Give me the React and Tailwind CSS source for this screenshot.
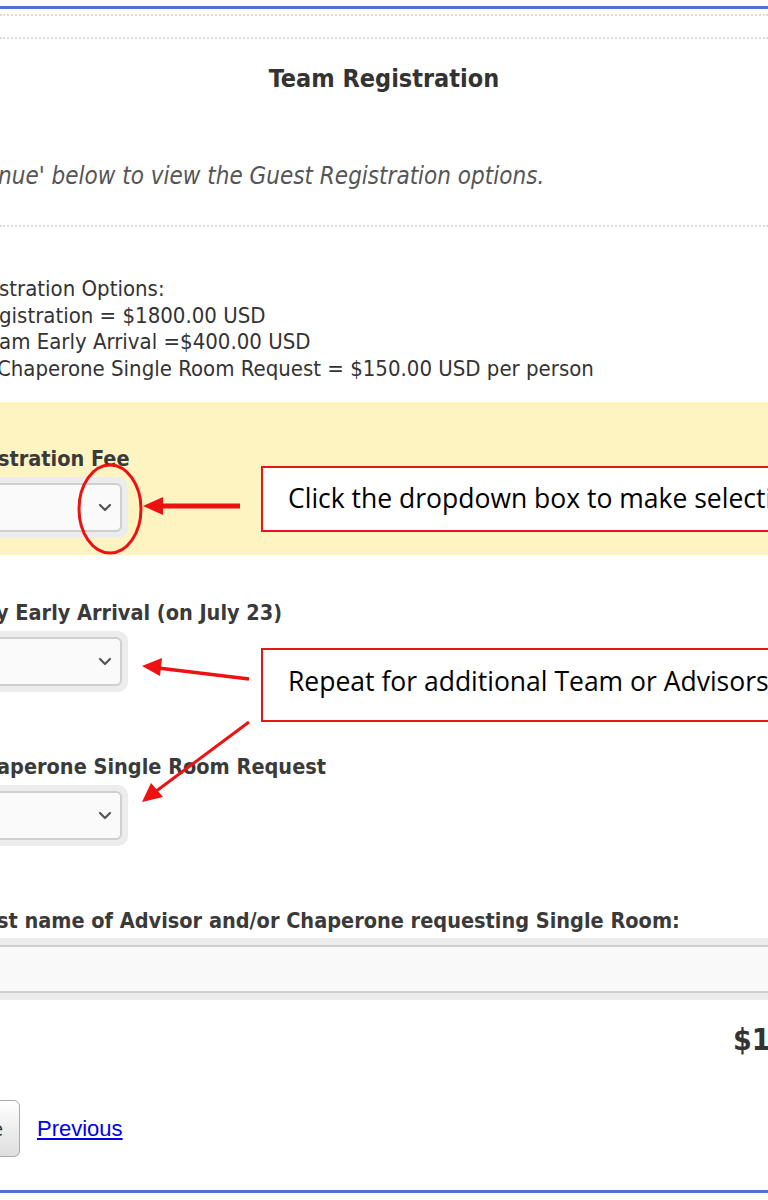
import React from "react";

function Chevron() {
  return (
    <svg width="14" height="10" viewBox="0 0 14 10" className="block">
      <polyline points="2,2 7,7 12,2" fill="none" stroke="#555" strokeWidth="2.2" strokeLinecap="round" strokeLinejoin="round" />
    </svg>
  );
}

function Select() {
  return (
    <div className="-ml-[20px] w-[148px] h-[61px] rounded-[10px] bg-[#ececec] p-[6px]">
      <div className="h-full rounded-[6px] border-2 border-[#cfcfcf] bg-[#fafafa] flex items-center justify-end pr-[8px]">
        <Chevron />
      </div>
    </div>
  );
}

export default function App() {
  const main = "font-['DejaVu_Sans_Condensed','DejaVu_Sans',sans-serif] font-stretch-condensed";
  const label = "h-[26px] leading-[26px] text-[21.5px] font-bold text-[#3a3a3a] whitespace-nowrap";
  const callout = "absolute left-[261px] w-[600px] border-2 border-[#e8141c] bg-white flex items-center pl-[25px] font-['Open_Sans',sans-serif] font-stretch-normal text-[26.5px] text-black whitespace-nowrap";
  return (
    <div className={`relative w-[768px] h-[1200px] overflow-hidden bg-white ${main}`}>
      <div className="mt-[6px] h-[3px] bg-[#4a77c9]" />
      <div className="mt-[5px] border-t-2 border-dotted border-[#dcdcdc]" />
      <div className="mt-[21px] border-t-2 border-dotted border-[#dcdcdc]" />
      <div className="mt-[20px] h-[40px] leading-[40px] text-center text-[25px] font-bold text-[#333]">
        Team Registration
      </div>
      <div className="mt-[62px] h-[30px] leading-[30px] whitespace-nowrap text-[24px] italic text-[#555] -ml-[2px]">
        nue' below to view the Guest Registration options.
      </div>
      <div className="mt-[34px] border-t-2 border-dotted border-[#dcdcdc]" />
      <div className="mt-[49px] text-[22px] leading-[26.5px] text-[#333] whitespace-nowrap">
        <div className="-ml-[1px]">stration Options:</div>
        <div className="-ml-[1px]">gistration = $1800.00 USD</div>
        <div className="-ml-[1px]">am Early Arrival =$400.00 USD</div>
        <div className="-ml-[3px]">Chaperone Single Room Request = $150.00 USD per person</div>
      </div>
      <div className="mt-[20px] bg-[#fdf4c2] pt-[44px] pb-[17px]">
        <div className={`${label} -ml-[2px]`}>stration Fee</div>
        <div className="mt-[5px]"><Select /></div>
      </div>
      <div className={`mt-[45px] ${label} -ml-[4px]`}>y Early Arrival (on July 23)</div>
      <div className="mt-[5px]"><Select /></div>
      <div className={`mt-[62px] ${label} -ml-[3px]`}>aperone Single Room Request</div>
      <div className="mt-[5px]"><Select /></div>
      <div className={`mt-[62px] ${label} -ml-[3px]`}>st name of Advisor and/or Chaperone requesting Single Room:</div>
      <div className="mt-[4px] -mx-[20px] h-[62px] bg-[#ececec] py-[7px]">
        <div className="h-full border-y-2 border-[#cfcfcf] bg-[#f9f9f9]" />
      </div>
      <div className="mt-[20px] h-[40px] leading-[40px] pl-[733px] text-[30px] font-bold text-[#333] whitespace-nowrap">$1800.00</div>
      <div className="mt-[40px] h-[57px] flex items-center">
        <div className="-ml-[80px] w-[100px] h-[57px] rounded-[6px] border border-[#aaa] bg-gradient-to-b from-white to-[#dedede] flex items-center justify-end pr-[16px] text-[20px] text-[#333]">
          Continue
        </div>
        <a href="#" className="ml-[17px] font-['Liberation_Sans',Arial,sans-serif] text-[22px] text-[#0000ee] underline">Previous</a>
      </div>
      <div className="mt-[33px] h-[3px] bg-[#4a77c9]" />

      {/* Annotation callouts */}
      <div className={`${callout} top-[466px] h-[66px]`}>
        Click the dropdown box to make selections
      </div>
      <div className={`${callout} top-[648px] h-[74px] pb-[7px]`}>
        Repeat for additional Team or Advisors
      </div>

      <svg className="absolute left-0 top-0 pointer-events-none" width="768" height="1200" viewBox="0 0 768 1200">
        <ellipse cx="110" cy="509" rx="31" ry="44" fill="none" stroke="#ee1111" strokeWidth="3" />
        <line x1="240" y1="506" x2="158" y2="506" stroke="#ee1111" strokeWidth="5" />
        <polygon points="143,506 163,497 163,515" fill="#ee1111" />
        <line x1="249" y1="679" x2="158" y2="668" stroke="#ee1111" strokeWidth="3.5" />
        <polygon points="142,666 162,658 160,676" fill="#ee1111" />
        <line x1="249" y1="722" x2="155" y2="792" stroke="#ee1111" strokeWidth="3" />
        <polygon points="142,802 151,783 163,797" fill="#ee1111" />
      </svg>
    </div>
  );
}
